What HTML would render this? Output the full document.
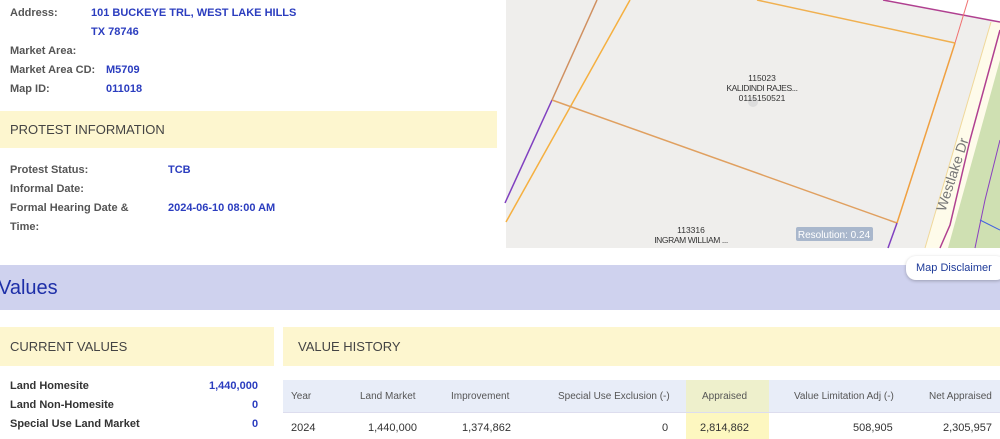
<!DOCTYPE html>
<html><head><meta charset="utf-8"><style>
body{margin:0;width:1000px;height:439px;overflow:hidden;background:#fff;font-family:"Liberation Sans",Arial,sans-serif;position:relative}
.a{position:absolute;white-space:nowrap}
.l{font-size:11px;font-weight:bold;color:#555}
.v{font-size:11px;font-weight:bold;color:#2b3dbf}
.hd{position:absolute;background:#fdf6cf;color:#444;font-size:13px}
.n{font-size:11px;color:#333}
</style></head><body>
<div class="a l" style="left:10px;top:7px">Address:</div>
<div class="a v" style="left:91px;top:7px">101 BUCKEYE TRL, WEST LAKE HILLS</div>
<div class="a v" style="left:91px;top:26px">TX 78746</div>
<div class="a l" style="left:10px;top:45px">Market Area:</div>
<div class="a l" style="left:10px;top:64px">Market Area CD:</div>
<div class="a v" style="left:106px;top:64px">M5709</div>
<div class="a l" style="left:10px;top:83px">Map ID:</div>
<div class="a v" style="left:106px;top:83px">011018</div>
<div class="hd" style="left:0;top:111px;width:497px;height:37px;line-height:37px;padding-left:10px;box-sizing:border-box">PROTEST INFORMATION</div>
<div class="a l" style="left:10px;top:164px">Protest Status:</div>
<div class="a v" style="left:168px;top:164px">TCB</div>
<div class="a l" style="left:10px;top:183px">Informal Date:</div>
<div class="a l" style="left:10px;top:202px">Formal Hearing Date &amp;</div>
<div class="a v" style="left:168px;top:202px">2024-06-10 08:00 AM</div>
<div class="a l" style="left:10px;top:221px">Time:</div>

<svg class="a" style="left:0;top:0" width="1000" height="249">
<rect x="506" y="0" width="494" height="248" fill="#efeeec"/>
<polygon points="883,0 1000,0 1000,22" fill="#fff"/>
<polygon points="991,22 1000,22 1000,248 925,248" fill="#fefbea"/>
<polygon points="1000,60 1000,248 948,248" fill="#cfe0b2"/>
<line x1="991" y1="22" x2="925" y2="248" stroke="#f0d89a" stroke-width="1"/>
<polyline points="1000,30 970,140 950,225 940,248" fill="none" stroke="#b04090" stroke-width="1.5"/>
<polyline points="1000,140 985,200 975,248" fill="none" stroke="#8a40c0" stroke-width="1"/>
<line x1="980" y1="220" x2="1000" y2="230" stroke="#4060e0" stroke-width="1"/>
<line x1="883" y1="0" x2="1000" y2="22" stroke="#b04090" stroke-width="1.5"/>
<line x1="968" y1="0" x2="955" y2="43" stroke="#f07070" stroke-width="1"/>
<line x1="597" y1="0" x2="552" y2="100" stroke="#d09060" stroke-width="1.5"/>
<line x1="552" y1="100" x2="505" y2="203" stroke="#8040c0" stroke-width="1.5"/>
<line x1="630" y1="0" x2="506" y2="222" stroke="#f5b040" stroke-width="1.5"/>
<line x1="552" y1="100" x2="897" y2="223" stroke="#e0a060" stroke-width="1.5"/>
<line x1="757" y1="0" x2="955" y2="43" stroke="#f0b050" stroke-width="1.5"/>
<line x1="955" y1="43" x2="897" y2="223" stroke="#f0a040" stroke-width="1.5"/>
<line x1="897" y1="223" x2="888" y2="248" stroke="#8040c0" stroke-width="1.5"/>
<circle cx="753" cy="102" r="5" fill="#ddd"/>
<text x="762" y="81" font-size="8.5" text-anchor="middle" fill="#333" font-family="Liberation Sans">115023</text>
<text x="762" y="91" font-size="8.5" text-anchor="middle" fill="#333" font-family="Liberation Sans" letter-spacing="-0.4">KALIDINDI RAJES...</text>
<text x="762" y="101" font-size="8.5" text-anchor="middle" fill="#333" font-family="Liberation Sans">0115150521</text>
<text x="691" y="233" font-size="8.5" text-anchor="middle" fill="#333" font-family="Liberation Sans">113316</text>
<text x="691" y="243" font-size="8.5" text-anchor="middle" fill="#333" font-family="Liberation Sans" letter-spacing="-0.4">INGRAM WILLIAM ...</text>
<text x="957" y="176" font-size="14" text-anchor="middle" fill="#777" font-family="Liberation Sans" transform="rotate(-72 957 176)">Westlake Dr</text>
<rect x="796" y="227" width="77" height="14" rx="2" fill="#a9b7cc"/>
<text x="834" y="238" font-size="10" text-anchor="middle" fill="#fff" font-family="Liberation Sans">Resolution: 0.24</text>
</svg>

<div class="a" style="left:0;top:265px;width:1000px;height:45px;background:#cfd2ee"></div>
<div class="a" style="left:-2px;top:277px;font-size:20px;color:#1e2fa8">Values</div>
<div class="a" style="left:906px;top:256px;width:100px;height:24px;background:#fff;border-radius:10px;box-shadow:0 1px 3px rgba(0,0,0,.25);font-size:11px;color:#1e3a99;line-height:24px;padding-left:10px;box-sizing:border-box">Map Disclaimer</div>

<div class="hd" style="left:0;top:327px;width:274px;height:39px;line-height:39px;padding-left:10px;box-sizing:border-box">CURRENT VALUES</div>
<div class="hd" style="left:283px;top:327px;width:717px;height:39px;line-height:39px;padding-left:15px;box-sizing:border-box">VALUE HISTORY</div>

<div class="a l" style="left:10px;top:380px;color:#333">Land Homesite</div>
<div class="a v" style="left:209px;top:380px">1,440,000</div>
<div class="a l" style="left:10px;top:399px;color:#333">Land Non-Homesite</div>
<div class="a v" style="left:252px;top:399px">0</div>
<div class="a l" style="left:10px;top:418px;color:#333">Special Use Land Market</div>
<div class="a v" style="left:252px;top:418px">0</div>

<div class="a" style="left:283px;top:380px;width:717px;height:32px;background:#e8edf8"></div>
<div class="a" style="left:686px;top:380px;width:83px;height:32px;background:#eef0cc"></div>
<div class="a" style="left:686px;top:413px;width:83px;height:26px;background:#fdf7c0"></div>
<div class="a" style="left:283px;top:412px;width:717px;height:1px;background:#dde"></div>
<div class="a n" style="left:291px;top:391px;font-size:10px;color:#555">Year</div>
<div class="a n" style="left:360px;top:391px;font-size:10px;color:#555">Land Market</div>
<div class="a n" style="left:451px;top:391px;font-size:10px;color:#555">Improvement</div>
<div class="a n" style="left:558px;top:391px;font-size:10px;color:#555">Special Use Exclusion (-)</div>
<div class="a n" style="left:702px;top:391px;font-size:10px;color:#555">Appraised</div>
<div class="a n" style="left:794px;top:391px;font-size:10px;color:#555">Value Limitation Adj (-)</div>
<div class="a n" style="left:929px;top:391px;font-size:10px;color:#555">Net Appraised</div>
<div class="a n" style="left:291px;top:422px">2024</div>
<div class="a n" style="left:368px;top:422px">1,440,000</div>
<div class="a n" style="left:462px;top:422px">1,374,862</div>
<div class="a n" style="left:662px;top:422px">0</div>
<div class="a n" style="left:700px;top:422px">2,814,862</div>
<div class="a n" style="left:853px;top:422px">508,905</div>
<div class="a n" style="left:943px;top:422px">2,305,957</div>
</body></html>
